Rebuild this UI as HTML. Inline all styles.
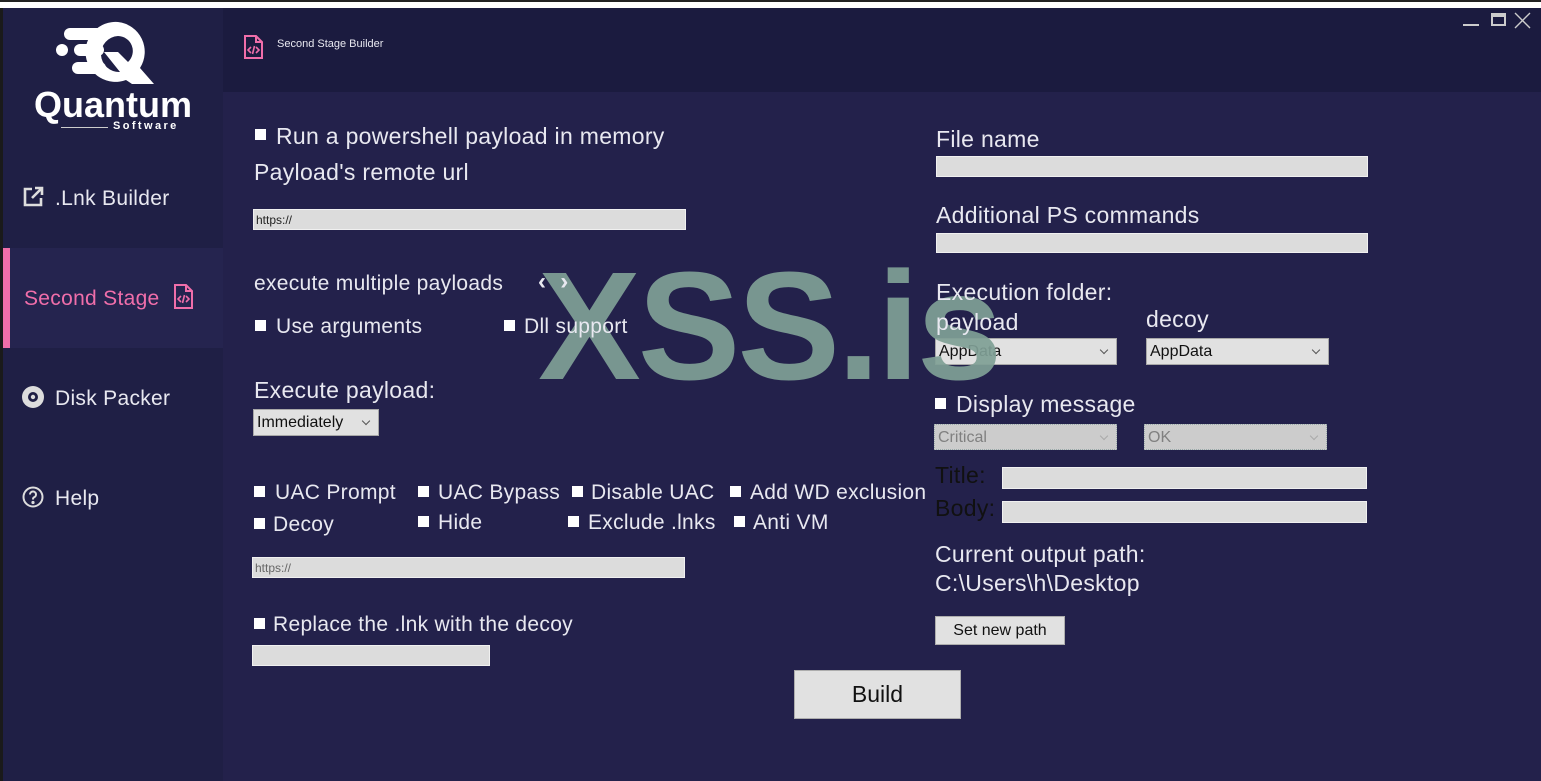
<!DOCTYPE html>
<html><head><meta charset="utf-8"><style>
*{margin:0;padding:0;box-sizing:border-box}
body{width:1541px;height:781px;overflow:hidden;background:#23214b;font-family:"Liberation Sans",Arial,sans-serif;color:#e8e8f0;position:relative}
.a{position:absolute;white-space:nowrap;line-height:1;letter-spacing:.3px;z-index:3}
.cb{position:absolute;width:11px;height:11px;background:#fff;z-index:3}
.in{position:absolute;background:#dcdcdc;border:1px solid #f0f0f0}
.sel{position:absolute;background:#e1e1e1;border:1px solid #a8a8a8;color:#111;font-size:16px;padding:5px 3px;line-height:1}
.sel:after{content:"";position:absolute;right:9px;top:8px;width:5px;height:5px;border-right:1px solid #555;border-bottom:1px solid #555;transform:rotate(45deg)}
.dis{background:#cccccc;border:1px dotted #9aa;color:#808080}
.dis:after{border-color:#aaa}
.btn{position:absolute;background:#e1e1e1;border:1px solid #adadad;color:#111;text-align:center}
.f22{font-size:23px}.f20{font-size:21px}
#wm{position:absolute;left:538px;top:249px;font-size:154px;line-height:1;font-weight:bold;color:#80a096;opacity:.92;letter-spacing:-3px;white-space:nowrap;z-index:2}
</style></head><body>
<div style="position:absolute;left:0;top:0;width:1541px;height:2px;background:#222"></div>
<div style="position:absolute;left:0;top:2px;width:1541px;height:6px;background:#fff"></div>
<div style="position:absolute;left:0;top:8px;width:3px;height:773px;background:#1a1a1a"></div>
<div style="position:absolute;left:3px;top:8px;width:220px;height:773px;background:#1f1f45"></div>
<div style="position:absolute;left:223px;top:8px;width:1318px;height:84px;background:#1b1b3f"></div>
<!-- logo -->
<svg style="position:absolute;left:50px;top:18px" width="110" height="68" viewBox="0 0 110 68">
<circle cx="12" cy="32" r="6" fill="#fff"/>
<rect x="14" y="10" width="40" height="12" rx="6" fill="#fff"/>
<rect x="24" y="26" width="30" height="12" rx="6" fill="#fff"/>
<rect x="22" y="44" width="34" height="12" rx="6" fill="#fff"/>
<path d="M68 4a30 30 0 1 0 8 58l6 4h22l-14-16a30 30 0 0 0-22-46zm0 14a15 15 0 0 1 10 26l-10-10h-14l16 20a15 15 0 0 1-2-36z" fill="#fff"/>
</svg>
<div class="a" style="left:34px;top:87px;font-size:36px;font-weight:bold;color:#fff;letter-spacing:0">Quantum</div>
<div style="position:absolute;left:61px;top:127px;width:47px;height:1px;background:#ccc"></div>
<div class="a" style="left:113px;top:121px;font-size:11px;font-weight:bold;letter-spacing:2.4px;color:#fff">Software</div>
<!-- nav -->
<svg style="position:absolute;left:22px;top:186px" width="22" height="22" viewBox="0 0 22 22" fill="none" stroke="#ddd" stroke-width="2.6"><path d="M10 3H3v16h16v-7"/><path d="M10 12L20 2M13 2h7v7"/></svg>
<div class="a f20" style="left:55px;top:188px">.Lnk Builder</div>
<div style="position:absolute;left:3px;top:248px;width:220px;height:100px;background:#25244f"></div>
<div style="position:absolute;left:3px;top:248px;width:7px;height:100px;background:#f06eaa"></div>
<div class="a f20" style="left:24px;top:288px;color:#f06eaa">Second Stage</div>
<svg style="position:absolute;left:173px;top:283px" width="21" height="27" viewBox="0 0 21 27" fill="none" stroke="#f06eaa" stroke-width="2"><path d="M2 2h11l6 6v17H2z"/><path d="M13 2v6h6"/><path d="M8 13l-3 3 3 3M13 13l3 3-3 3M11.5 12l-2 8" stroke-width="1.6"/></svg>
<svg style="position:absolute;left:22px;top:386px" width="22" height="22" viewBox="0 0 22 22"><circle cx="11" cy="11" r="11" fill="#ddd"/><circle cx="11" cy="11" r="5" fill="#1f1f45"/><circle cx="11" cy="11" r="2.2" fill="#ddd"/></svg>
<div class="a f20" style="left:55px;top:388px">Disk Packer</div>
<svg style="position:absolute;left:22px;top:486px" width="22" height="22" viewBox="0 0 22 22" fill="none" stroke="#ddd" stroke-width="2"><circle cx="11" cy="11" r="9.5"/><path d="M8 8.5a3 3 0 1 1 4 2.8c-1 .4-1 1.2-1 2.2"/><circle cx="11" cy="16.5" r=".6" fill="#ddd"/></svg>
<div class="a f20" style="left:55px;top:488px">Help</div>
<!-- header -->
<svg style="position:absolute;left:243px;top:34px" width="21" height="26" viewBox="0 0 21 26" fill="none" stroke="#f06eaa" stroke-width="2"><path d="M2 2h11l6 6v16H2z"/><path d="M13 2v6h6"/><path d="M8 13l-3 3 3 3M13 13l3 3-3 3M11.5 12l-2 8" stroke-width="1.6"/></svg>
<div class="a" style="left:277px;top:39px;font-size:11px;letter-spacing:0">Second Stage Builder</div>
<div style="position:absolute;left:1463px;top:24px;width:16px;height:2px;background:#ccc"></div>
<div style="position:absolute;left:1491px;top:13px;width:15px;height:13px;border:2px solid #ccc;border-top-width:4px"></div>
<svg style="position:absolute;left:1514px;top:12px" width="17" height="17" viewBox="0 0 17 17" stroke="#ccc" stroke-width="1.4"><path d="M1 1l15 15M16 1L1 16"/></svg>
<!-- left column -->
<div class="cb" style="left:255px;top:129px"></div>
<div class="a f22" style="left:276px;top:125px">Run a powershell payload in memory</div>
<div class="a f22" style="left:254px;top:161px">Payload's remote url</div>
<div class="in" style="left:253px;top:209px;width:433px;height:21px;font-size:12px;color:#222;padding:3px 2px">https://</div>
<div class="a f20" style="left:254px;top:273px">execute multiple payloads</div>
<div class="a" style="left:538px;top:270px;font-size:24px;font-weight:bold">&lsaquo;&nbsp;&nbsp;&rsaquo;</div>
<div class="cb" style="left:255px;top:320px"></div>
<div class="a f20" style="left:276px;top:316px">Use arguments</div>
<div class="cb" style="left:504px;top:320px"></div>
<div class="a f20" style="left:524px;top:316px">Dll support</div>
<div class="a f22" style="left:254px;top:379px">Execute payload:</div>
<div class="sel" style="left:253px;top:409px;width:126px;height:27px">Immediately</div>
<div class="cb" style="left:254px;top:486px"></div><div class="a f20" style="left:275px;top:482px">UAC Prompt</div>
<div class="cb" style="left:418px;top:486px"></div><div class="a f20" style="left:438px;top:482px">UAC Bypass</div>
<div class="cb" style="left:572px;top:486px"></div><div class="a f20" style="left:591px;top:482px">Disable UAC</div>
<div class="cb" style="left:730px;top:486px"></div><div class="a f20" style="left:750px;top:482px">Add WD exclusion</div>
<div class="cb" style="left:254px;top:518px"></div><div class="a f20" style="left:273px;top:514px">Decoy</div>
<div class="cb" style="left:418px;top:516px"></div><div class="a f20" style="left:438px;top:512px">Hide</div>
<div class="cb" style="left:568px;top:516px"></div><div class="a f20" style="left:588px;top:512px">Exclude .lnks</div>
<div class="cb" style="left:734px;top:516px"></div><div class="a f20" style="left:753px;top:512px">Anti VM</div>
<div class="in" style="left:252px;top:557px;width:433px;height:21px;font-size:12px;color:#666;padding:3px 2px">https://</div>
<div class="cb" style="left:254px;top:618px"></div>
<div class="a f20" style="left:273px;top:614px">Replace the .lnk with the decoy</div>
<div class="in" style="left:252px;top:645px;width:238px;height:21px"></div>
<div class="btn" style="left:794px;top:670px;width:167px;height:49px;font-size:23px;line-height:47px">Build</div>
<!-- right column -->
<div class="a f22" style="left:936px;top:128px">File name</div>
<div class="in" style="left:936px;top:156px;width:432px;height:21px"></div>
<div class="a f22" style="left:936px;top:204px">Additional PS commands</div>
<div class="in" style="left:936px;top:233px;width:432px;height:20px"></div>
<div class="a f22" style="left:936px;top:281px">Execution folder:</div>
<div class="a f22" style="left:936px;top:311px">payload</div>
<div class="a f22" style="left:1146px;top:308px">decoy</div>
<div class="sel" style="left:935px;top:338px;width:182px;height:27px">AppData</div>
<div class="sel" style="left:1146px;top:338px;width:183px;height:27px">AppData</div>
<div class="cb" style="left:935px;top:398px"></div>
<div class="a f22" style="left:956px;top:393px">Display message</div>
<div class="sel dis" style="left:934px;top:424px;width:183px;height:26px">Critical</div>
<div class="sel dis" style="left:1144px;top:424px;width:183px;height:26px">OK</div>
<div class="a f22" style="left:935px;top:464px;color:#111">Title:</div>
<div class="in" style="left:1002px;top:467px;width:365px;height:22px"></div>
<div class="a f22" style="left:935px;top:497px;color:#111">Body:</div>
<div class="in" style="left:1002px;top:501px;width:365px;height:22px"></div>
<div class="a f22" style="left:935px;top:543px">Current output path:</div>
<div class="a f22" style="left:935px;top:572px">C:\Users\h\Desktop</div>
<div class="btn" style="left:935px;top:616px;width:130px;height:29px;font-size:16px;line-height:27px">Set new path</div>
<!-- watermark -->
<div id="wm">XSS.is</div>
</body></html>
